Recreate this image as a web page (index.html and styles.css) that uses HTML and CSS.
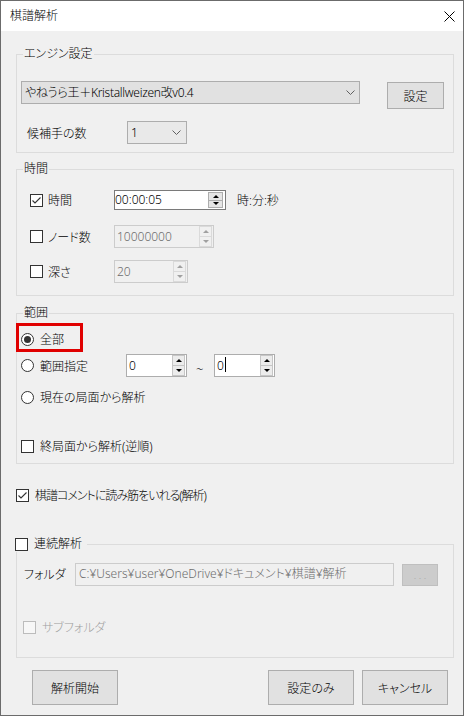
FILE: index.html
```html
<!DOCTYPE html>
<html lang="ja">
<head>
<meta charset="utf-8">
<title>棋譜解析</title>
<link rel="stylesheet" href="styles.css">
</head>
<body>
<div class="window">
  <div class="titlebar">
    <span class="title">棋譜解析</span>
    <span class="close"><svg width="11" height="11" viewBox="0 0 11 11"><path d="M0.5 0.5 L10.5 10.5 M10.5 0.5 L0.5 10.5" stroke="#000" stroke-width="1" fill="none"/></svg></span>
  </div>
  <div class="content">

    <div class="group g-engine">
      <div class="legend">エンジン設定</div>
      <div class="row r-engine">
        <div class="combo combo-engine"><span class="combo-text engine-text">やねうら王＋Kristallweizen改v0.4</span><svg class="chev" width="9" height="5" viewBox="0 0 9 5"><path d="M0.5 0.5 L4.5 4.5 L8.5 0.5" stroke="#606060" fill="none"/></svg></div>
        <div class="btn btn-set">設定</div>
      </div>
      <div class="row r-cand">
        <span class="lbl-cand">候補手の数</span>
        <div class="combo combo-cand"><span class="combo-text">1</span><svg class="chev" width="9" height="5" viewBox="0 0 9 5"><path d="M0.5 0.5 L4.5 4.5 L8.5 0.5" stroke="#606060" fill="none"/></svg></div>
      </div>
    </div>

    <div class="group g-time">
      <div class="legend">時間</div>
      <div class="row crow r-time">
        <div class="ck-cell"><span class="cb on"><svg width="11" height="11" viewBox="0 0 11 11"><path d="M1.5 5.5 L4 8 L9.5 2.5" stroke="#333" stroke-width="1.1" fill="none"/></svg></span><span class="ck-lbl">時間</span></div>
        <div class="spin spin-time"><span class="val">00:00:05</span><span class="updown"><span class="ud"><i class="up"></i></span><span class="ud"><i class="dn"></i></span></span></div>
        <span class="unit">時:分:秒</span>
      </div>
      <div class="row crow r-node">
        <div class="ck-cell"><span class="cb"></span><span class="ck-lbl">ノード数</span></div>
        <div class="spin dis spin-node"><span class="val">10000000</span><span class="updown"><span class="ud"><i class="up"></i></span><span class="ud"><i class="dn"></i></span></span></div>
      </div>
      <div class="row crow r-depth">
        <div class="ck-cell"><span class="cb"></span><span class="ck-lbl">深さ</span></div>
        <div class="spin dis spin-depth"><span class="val">20</span><span class="updown"><span class="ud"><i class="up"></i></span><span class="ud"><i class="dn"></i></span></span></div>
      </div>
    </div>

    <div class="group g-range">
      <div class="legend">範囲</div>
      <div class="row rrow r-all">
        <span class="rb on"><span class="dot"></span></span><span class="rb-lbl">全部</span>
        <span class="highlight"></span>
      </div>
      <div class="row rrow r-spec">
        <div class="rb-cell"><span class="rb"></span><span class="rb-lbl">範囲指定</span></div>
        <div class="spin spin-num"><span class="val">0</span><span class="updown"><span class="ud"><i class="up"></i></span><span class="ud"><i class="dn"></i></span></span></div>
        <span class="tilde">~</span>
        <div class="spin spin-num"><span class="val">0<span class="caret"></span></span><span class="updown"><span class="ud"><i class="up"></i></span><span class="ud"><i class="dn"></i></span></span></div>
      </div>
      <div class="row rrow r-cur">
        <span class="rb"></span><span class="rb-lbl">現在の局面から解析</span>
      </div>
      <div class="row rrow r-end">
        <span class="cb"></span><span class="rb-lbl">終局面から解析(逆順)</span>
      </div>
    </div>

    <div class="row r-comment">
      <span class="cb on"><svg width="11" height="11" viewBox="0 0 11 11"><path d="M1.5 5.5 L4 8 L9.5 2.5" stroke="#333" stroke-width="1.1" fill="none"/></svg></span><span class="rb-lbl lbl-comment">棋譜コメントに読み筋をいれる(解析)</span>
    </div>

    <div class="group g-cont">
      <div class="legend legend-ck"><span class="cb"></span><span class="rb-lbl">連続解析</span></div>
      <div class="row r-folder">
        <span class="lbl-folder">フォルダ</span>
        <div class="textbox dis">C:¥Users¥user¥OneDrive¥ドキュメント¥棋譜¥解析</div>
        <div class="btn-browse">. . .</div>
      </div>
      <div class="row r-sub">
        <span class="cb dis"></span><span class="rb-lbl dis-lbl">サブフォルダ</span>
      </div>
    </div>

    <div class="buttons">
      <div class="btn btn-main btn-start">解析開始</div>
      <div class="spacer"></div>
      <div class="btn btn-main">設定のみ</div>
      <div class="btn btn-main btn-cancel">キャンセル</div>
    </div>

  </div>
</div>
</body>
</html>
```

FILE: styles.css
```css
* { box-sizing: border-box; }
html, body { margin: 0; padding: 0; }
body {
  width: 464px;
  height: 716px;
  overflow: hidden;
  background: #f0f0f0;
  color: #000;
  font-family: "Noto Sans", "Noto Sans CJK JP", sans-serif;
  font-size: 12px;
  font-weight: 300;
  font-feature-settings: "palt";
}
.window {
  width: 464px;
  height: 716px;
  border: 1px solid #6b6b6b;
  display: flex;
  flex-direction: column;
  background: #f0f0f0;
}
.titlebar {
  height: 30px;
  flex: none;
  background: #fff;
  display: flex;
  align-items: center;
  justify-content: space-between;
  padding: 0 8px 0 9px;
}
.title { line-height: 16px; }
.close { display: flex; width: 11px; height: 11px; margin-top: 1px; }

.content {
  flex: 1;
  display: flex;
  flex-direction: column;
  padding: 0 9px 0 15px;
  overflow: hidden;
}
.group {
  border: 1px solid #dcdcdc;
  display: flex;
  flex-direction: column;
  flex: none;
}
.legend {
  width: fit-content;
  height: 16px;
  line-height: 16px;
  margin: -9px 0 0 6px;
  padding: 0 1px;
  background: #f0f0f0;
}
.row { display: flex; align-items: center; flex: none; }

/* engine group */
.g-engine { margin-top: 23px; padding-bottom: 8px; }
.r-engine { align-items: flex-start; margin: 19px 0 0 4px; }
.combo {
  display: flex;
  align-items: center;
  justify-content: space-between;
  height: 23px;
  border: 1px solid #adadad;
  background: #e1e1e1;
  padding: 0 4px 0 3px;
}
.combo-engine { width: 339px; }
.engine-text { letter-spacing: -0.3px; }
.combo-cand { width: 60px; background: #e9e9e9; padding-right: 5px; }
.combo-text { line-height: 16px; }
.chev { display: block; flex: none; }
.btn {
  display: flex;
  align-items: center;
  justify-content: center;
  background: #e1e1e1;
  border: 1px solid #adadad;
}
.btn-set { width: 57px; height: 27px; margin: 1px 0 0 27px; }
.r-cand { margin: 12px 0 0 10px; }
.lbl-cand { width: 100px; }

/* time group */
.g-time { margin-top: 16px; padding-bottom: 12px; }
.crow { padding-left: 13px; }
.r-time { margin-top: 13px; height: 20px; }
.r-node { margin-top: 15px; height: 23px; }
.r-depth { margin-top: 12px; height: 23px; }
.ck-cell { width: 84px; display: flex; align-items: center; }
.ck-lbl { margin-left: 5px; }
.unit { margin-left: 11px; }

.cb {
  width: 13px;
  height: 13px;
  flex: none;
  border: 1px solid #333;
  background: #fff;
  display: flex;
  align-items: center;
  justify-content: center;
}
.cb svg { display: block; }
.cb.dis { border-color: #bcbcbc; background: #f7f7f7; }
.rb {
  width: 13px;
  height: 13px;
  flex: none;
  border: 1px solid #333;
  border-radius: 50%;
  background: #fff;
  display: flex;
  align-items: center;
  justify-content: center;
}
.dot { width: 7px; height: 7px; border-radius: 50%; background: #333; }

/* spinners */
.spin {
  display: flex;
  align-items: stretch;
  height: 23px;
  border: 1px solid #adadad;
  background: #fff;
}
.spin .val {
  flex: 1;
  display: flex;
  align-items: center;
  padding-left: 2px;
  padding-bottom: 1px;
}
.updown {
  width: 13px;
  display: flex;
  flex-direction: column;
  margin: 0 1px 0 0;
  flex: none;
}
.ud {
  flex: 1;
  display: flex;
  align-items: center;
  justify-content: center;
  border: 1px solid #c6c6c6;
  background: #ececec;
}
.ud + .ud { border-top: none; }
.up {
  width: 0; height: 0;
  border-left: 3px solid transparent;
  border-right: 3px solid transparent;
  border-bottom: 3px solid #000;
}
.dn {
  width: 0; height: 0;
  border-left: 3px solid transparent;
  border-right: 3px solid transparent;
  border-top: 3px solid #000;
}
.spin-time { width: 112px; height: 20px; border-color: #7a7a7a; }
.spin-time .val { padding-left: 0; }
.spin-time .updown { width: 15px; margin: 1px 2px 1px 0; }
.spin-time .ud { border-color: #adadad; background: #e5e5e5; }
.spin-node { width: 100px; }
.spin-depth { width: 74px; }
.spin.dis { background: #f0f0f0; border-color: #cccccc; color: #6d6d6d; }
.spin.dis .ud { border-color: #dadada; background: #f0f0f0; }
.spin.dis .up { border-bottom-color: #a0a0a0; }
.spin.dis .dn { border-top-color: #a0a0a0; }
.spin-num { width: 61px; }
.spin-num .val { align-items: flex-start; padding-top: 2px; }
.caret { display: inline-block; width: 1px; height: 15px; background: #000; margin-left: 1px; }

/* range group */
.g-range { margin-top: 17px; padding-bottom: 7px; }
.rrow { padding-left: 4px; }
.r-all { margin-top: 8px; height: 20px; position: relative; }
.highlight {
  position: absolute;
  left: -1px;
  top: -6px;
  width: 67px;
  height: 29px;
  border: 3px solid #e00000;
}
.rb-lbl { margin-left: 6px; }
.r-spec { margin-top: 5px; height: 23px; }
.rb-cell { width: 105px; display: flex; align-items: center; }
.tilde { width: 27px; padding: 6px 0 0 9px; font-size: 13px; }
.r-cur { margin-top: 10px; height: 20px; }
.r-end { margin-top: 29px; height: 20px; }

.r-comment { margin-top: 21px; height: 20px; }
.lbl-comment { letter-spacing: -1px; }

/* continuous group */
.g-cont { margin-top: 39px; padding-bottom: 20px; }
.legend-ck {
  display: flex;
  align-items: center;
  margin-left: -2px;
  padding: 0 5px 0 0;
}
.r-folder { align-items: flex-start; margin-top: 11px; height: 23px; padding-left: 7px; }
.lbl-folder { width: 51px; line-height: 23px; }
.textbox {
  width: 319px;
  height: 23px;
  border: 1px solid #cccccc;
  background: #f0f0f0;
  color: #6d6d6d;
  padding-left: 3px;
  line-height: 20px;
}
.btn-browse {
  width: 36px;
  height: 22px;
  margin: 1px 0 0 8px;
  background: #cccccc;
  border: 1px solid #bfbfbf;
  color: #a6a6a6;
  display: flex;
  align-items: center;
  justify-content: center;
  font-size: 10px;
  padding-bottom: 1px;
}
.r-sub { margin-top: 31px; height: 20px; padding-left: 6px; }
.dis-lbl { color: #a0a0a0; }

/* bottom buttons */
.buttons { display: flex; margin-top: 12px; padding: 0 6px 0 16px; flex: none; }
.btn-main { width: 86px; height: 35px; }
.spacer { flex: 1; }
.btn-cancel { margin-left: 8px; }
```
